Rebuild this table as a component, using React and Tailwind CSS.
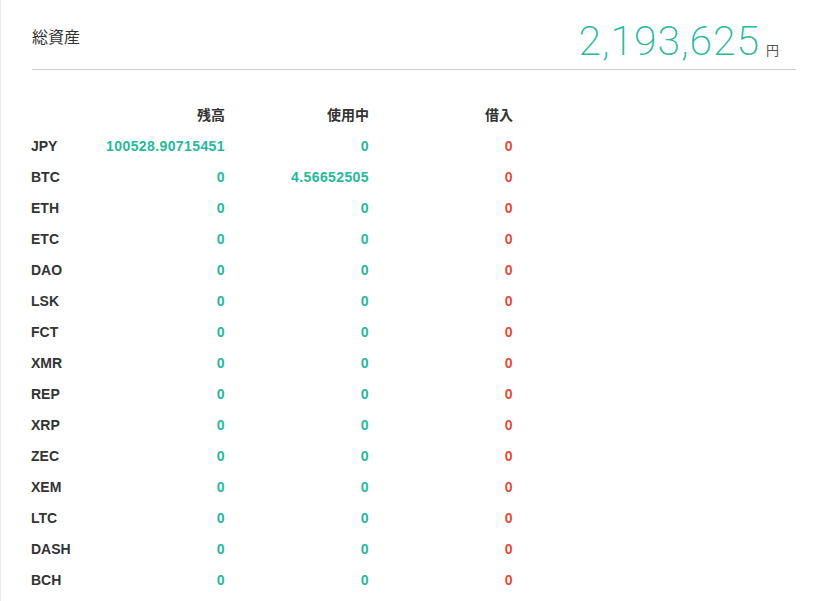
import React from 'react';

const rows = [
  ['JPY', '100528.90715451', '0', '0'],
  ['BTC', '0', '4.56652505', '0'],
  ['ETH', '0', '0', '0'],
  ['ETC', '0', '0', '0'],
  ['DAO', '0', '0', '0'],
  ['LSK', '0', '0', '0'],
  ['FCT', '0', '0', '0'],
  ['XMR', '0', '0', '0'],
  ['REP', '0', '0', '0'],
  ['XRP', '0', '0', '0'],
  ['ZEC', '0', '0', '0'],
  ['XEM', '0', '0', '0'],
  ['LTC', '0', '0', '0'],
  ['DASH', '0', '0', '0'],
  ['BCH', '0', '0', '0'],
];

const cols = 'grid grid-cols-[58px_136px_144px_144px] h-[31px] items-center';

export default function App() {
  return (
    <div className="min-h-[601px] bg-white border-l border-[#ececec] pl-[30px] pr-[28px] font-['Liberation_Sans','Noto_Sans_CJK_JP',sans-serif] text-[#333]">
      {/* 総資産 */}
      <div className="h-[70px] border-b border-[#cfcfcf] flex justify-between items-start pt-[21px] ml-px">
        <div className="text-[16px] leading-6 mt-[5px]">総資産</div>
        <div className="flex items-baseline">
          <span className="font-['Roboto'] font-extralight text-[41px] leading-none tracking-[0.9px] text-[#26b99a]">2,193,625</span>
          <span className="text-[13px] text-[#555] ml-[6px] mr-[17px]">円</span>
        </div>
      </div>

      <div className="mt-[30px] text-[14px] font-bold">
        <div className={cols}>
          <div></div>
          <div className="text-right">残高</div>
          <div className="text-right">使用中</div>
          <div className="text-right">借入</div>
        </div>
        {rows.map(([sym, bal, used, borrow]) => (
          <div key={sym} className={cols}>
            <div>{sym}</div>
            <div className="text-right tracking-[0.4px] text-[#26b99a]">{bal}</div>
            <div className="text-right tracking-[0.4px] text-[#26b99a]">{used}</div>
            <div className="text-right tracking-[0.4px] text-[#e2493b]">{borrow}</div>
          </div>
        ))}
      </div>
    </div>
  );
}
